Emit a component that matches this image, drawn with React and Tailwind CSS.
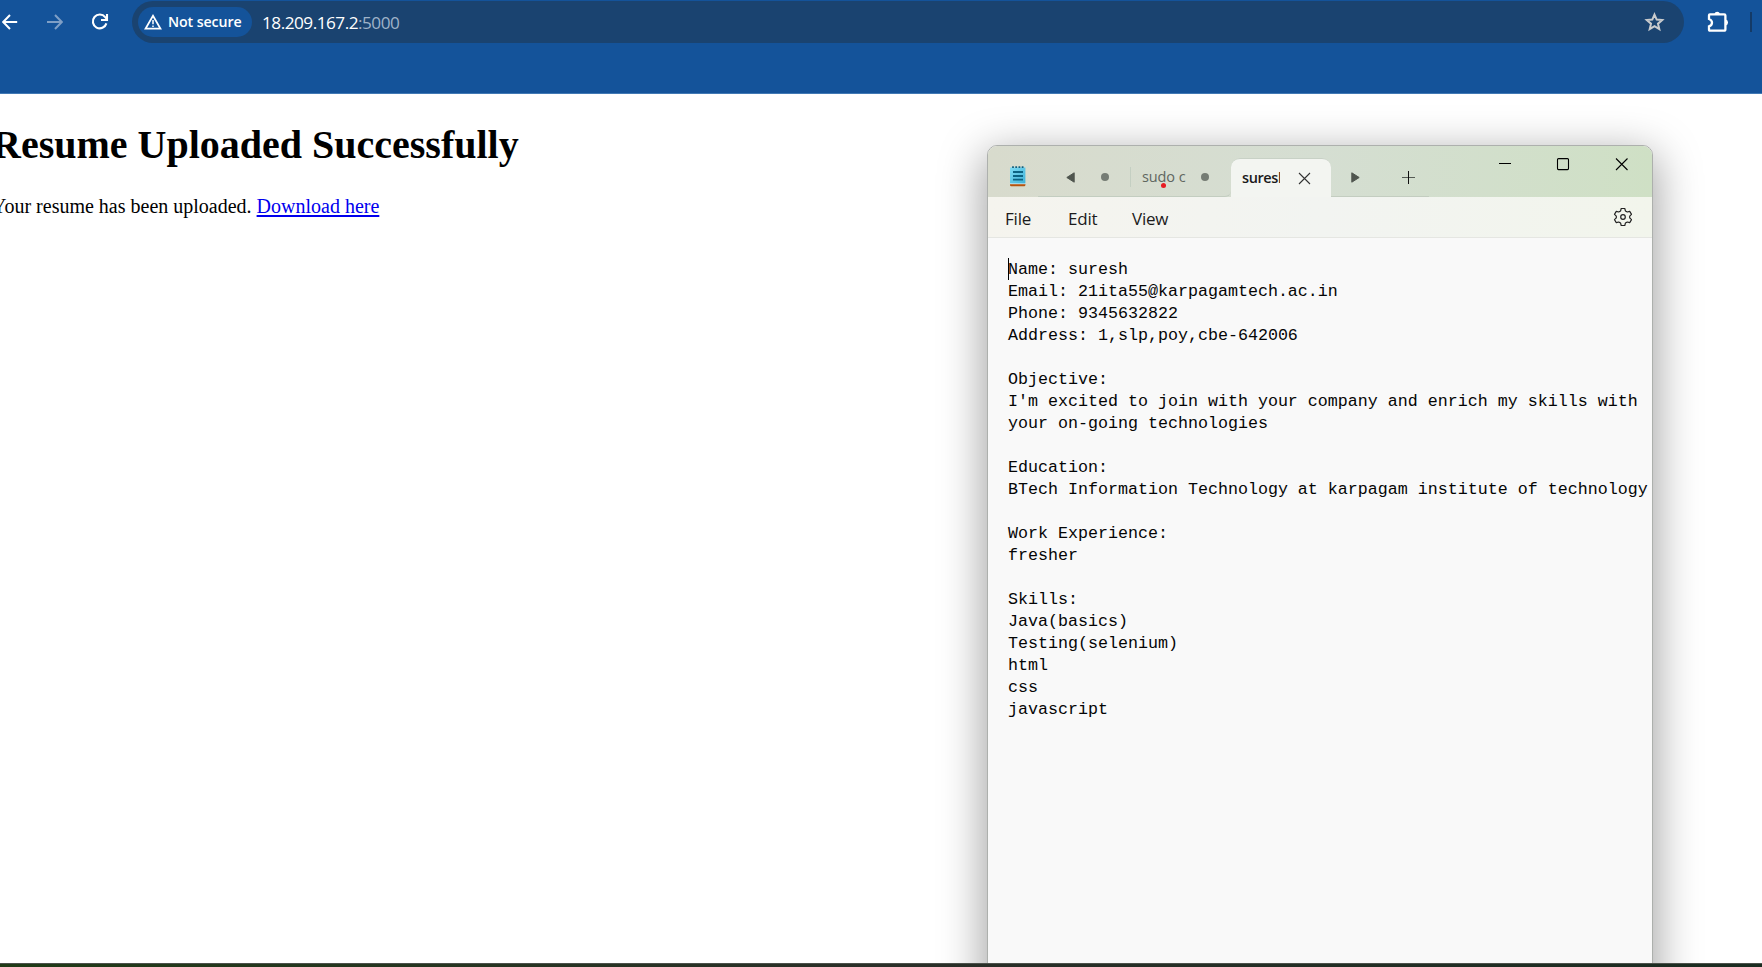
import React from "react";

const RESUME = `Name: suresh
Email: 21ita55@karpagamtech.ac.in
Phone: 9345632822
Address: 1,slp,poy,cbe-642006

Objective:
I'm excited to join with your company and enrich my skills with
your on-going technologies

Education:
BTech Information Technology at karpagam institute of technology

Work Experience:
fresher

Skills:
Java(basics)
Testing(selenium)
html
css
javascript`;

function BrowserBar() {
  return (
    <header className="flex h-[94px] shrink-0 items-start border-b border-[#4179b4] bg-[#14539a] font-['Open_Sans',sans-serif]">
      <div className="flex h-11 w-[132px] shrink-0 items-center">
        <svg className="ml-[2px] block" width="16" height="16" viewBox="0 0 16 16" fill="none" stroke="#fff" strokeWidth="2">
          <path d="M15.2 8H1.6M8 1L1.2 8L8 15" />
        </svg>
        <svg className="ml-[29px] block" width="16" height="16" viewBox="0 0 16 16" fill="none" stroke="#7f9fc6" strokeWidth="2">
          <path d="M0 8H14.2M8 1L14.8 8L8 15" />
        </svg>
        <svg className="ml-[28px] block" width="18" height="18" viewBox="0 0 18 18" fill="none" stroke="#fff" strokeWidth="2.1">
          <path d="M15.4 10.4A6.9 6.9 0 1 1 14.2 4.2L15.6 5.8" />
          <path d="M16 1V7H10" />
        </svg>
      </div>
      <div className="mt-px flex h-[42px] w-[1552px] shrink-0 items-center rounded-full bg-[#1a4370] pl-[6px]">
        <div className="flex h-[30px] w-[114px] items-center rounded-full bg-[#14539a] pl-[6px]">
          <svg className="block" width="18" height="16" viewBox="0 0 18 16" fill="none" stroke="#fff">
            <path d="M9 1.8L16.5 14.7H1.5Z" strokeWidth="1.7" />
            <path d="M9 6V10.2M9 11.4V13" strokeWidth="1.5" />
          </svg>
          <span className="ml-[6px] whitespace-nowrap text-[14.2px] font-semibold tracking-[-0.1px] text-white">Not secure</span>
        </div>
        <div className="ml-[10px] mt-[2px] whitespace-nowrap text-[17.2px] tracking-[-0.5px] text-white">
          18.209.167.2<span className="text-[#9fb2c8]">:5000</span>
        </div>
        <svg className="ml-auto mr-[19px] block" width="21" height="20" viewBox="0 0 21 20" fill="none" stroke="#c9cbcd" strokeWidth="2">
          <path d="M10.5 2.6L12.7 7.6L18.2 8.1L14 11.7L15.3 17.2L10.5 14.2L5.7 17.2L7 11.7L2.8 8.1L8.3 7.6Z" />
        </svg>
      </div>
      <div className="flex h-11 flex-1 items-center">
        <svg className="ml-[23px] block" width="22" height="22" viewBox="0 0 22 22">
          <path
            d="M2.9 3.3H17.2Q18.4 3.3 18.4 4.5V18.2Q18.4 19.7 17 19.7H3Q2 19.7 2 18.6V15.4Q5 14.4 5 11.7Q5 9.1 2 8V4.6Q2 3.3 2.9 3.3Z"
            fill="none"
            stroke="#fff"
            strokeWidth="2.3"
          />
          <path d="M7.4 3A2.9 2.9 0 0 1 13 3ZM18.8 8.6A3 3 0 0 1 18.8 14.4Z" fill="#fff" />
        </svg>
        <span className="ml-[21px] h-5 w-[2px] bg-[#143a66]" />
      </div>
    </header>
  );
}

function NotepadIcon() {
  return (
    <svg className="block" width="16" height="21" viewBox="0 0 16 21">
      <defs>
        <linearGradient id="sheet" x1="0" y1="0" x2="1" y2="1">
          <stop offset="0" stopColor="#7fdcf5" />
          <stop offset="1" stopColor="#3fb2d8" />
        </linearGradient>
      </defs>
      <path d="M0 18H15.4V19Q15.4 20.3 14.2 20.3H1.2Q0 20.3 0 19Z" fill="#b5530f" />
      <rect y="16.6" width="15.4" height="1.6" fill="#eaf6fa" />
      <path d="M0 1.5H15.4V17.4H0Z" fill="url(#sheet)" />
      <path d="M3 0.2V2M6.2 0.2V2M9.4 0.2V2M12.6 0.2V2" stroke="#12607f" strokeWidth="1.8" />
      <path d="M3 6H13M3 10H13M3 13.6H13" stroke="#0c6484" strokeWidth="1.9" />
    </svg>
  );
}

function Notepad() {
  return (
    <section className="absolute left-[987px] top-[51px] flex h-[900px] w-[666px] flex-col overflow-hidden rounded-[10px] border border-[#adb0ad] bg-[#f9f9f9] shadow-[0_12px_44px_4px_rgba(0,0,0,0.36)]">
      <div className="flex h-[51px] shrink-0 bg-gradient-to-r from-[#d8dbcd] via-[#d5ded2] to-[#cfe0c5] font-['Open_Sans',sans-serif]">
        <div className="w-[50px] shrink-0 pl-[22px] pt-[20px]">
          <NotepadIcon />
        </div>
        <div className="flex w-[193px] shrink-0 items-center rounded-br-[6px] border-b border-[#c3cdc0] pt-[12px]">
          <svg className="ml-[28px] block" width="9" height="11" viewBox="0 0 9 11">
            <path d="M8.2 0.8V10.2L0.8 5.5Z" fill="#50564f" stroke="#50564f" strokeLinejoin="round" />
          </svg>
          <span className="ml-[26px] size-2 rounded-full bg-[#757c74]" />
          <span className="ml-[21px] h-5 w-px bg-[#c4cfc2]" />
          <div className="relative ml-[11px] w-[46px] whitespace-nowrap text-[14.5px] leading-5 tracking-[-0.1px] text-[#60665f]">
            sudo c
            <span className="absolute left-[19px] top-[16px] size-[5px] rounded-full bg-[#e81c23]" />
          </div>
          <span className="ml-[13px] size-2 rounded-full bg-[#757c74]" />
        </div>
        <div className="mt-[12px] flex h-[39px] w-[100px] shrink-0 items-center rounded-t-[9px] border-t border-[#c8d1c6] bg-[#f3f5f1] pl-[11px]">
          <div className="w-[38px] shrink-0 overflow-hidden whitespace-nowrap text-[14.5px] font-semibold leading-5 tracking-[-0.4px] text-[#1a1a1a]">suresh</div>
          <svg className="ml-[18px] block shrink-0" width="13" height="13" viewBox="0 0 13 13" stroke="#333" strokeWidth="1.1">
            <path d="M1 1L12 12M12 1L1 12" />
          </svg>
        </div>
        <div className="flex w-[98px] shrink-0 items-center border-b border-[#c3cdc0] pt-[13px]">
          <svg className="ml-[20px] block" width="9" height="11" viewBox="0 0 9 11">
            <path d="M0.8 0.8V10.2L8.2 5.5Z" fill="#50564f" stroke="#50564f" strokeLinejoin="round" />
          </svg>
          <svg className="ml-[42px] block" width="13" height="13" viewBox="0 0 13 13">
            <path d="M0 6.5H13" stroke="#555b54" strokeWidth="1.2" />
            <path d="M6.5 0V13" stroke="#111" />
          </svg>
        </div>
        <div className="flex flex-1 items-start pl-[70px] pt-[12px]">
          <svg className="block" width="130" height="13" viewBox="0 0 130 13" fill="none" stroke="#000" strokeWidth="1.1">
            <path d="M0 5.5H12" />
            <rect x="58.5" y="0.6" width="11" height="11" rx="1" />
            <path d="M117 0.5L128.5 12M128.5 0.5L117 12" />
          </svg>
        </div>
      </div>
      <div className="flex h-[41px] shrink-0 items-center border-b border-[#e5e6e2] bg-gradient-to-r from-[#f5f4ee] via-[#f2f4f1] to-[#f2f5ec] pl-[17px] font-['Open_Sans',sans-serif] text-[17px] tracking-[-0.2px] text-[#1b1b1b]">
        <span className="w-[63px] pt-[3px]">File</span>
        <span className="w-[64px] pt-[3px]">Edit</span>
        <span className="pt-[3px]">View</span>
        <svg className="ml-auto mr-[19px] block" width="20" height="20" viewBox="0 0 20 20" fill="none" stroke="#222" strokeWidth="1.2" strokeLinejoin="round">
          <circle cx="10" cy="10" r="2.3" />
          <path d="M8.2 1.5H11.8L12.4 3.9L14.3 5L16.7 4.3L18.5 7.4L16.7 9.1V10.9L18.5 12.6L16.7 15.7L14.3 15L12.4 16.1L11.8 18.5H8.2L7.6 16.1L5.7 15L3.3 15.7L1.5 12.6L3.3 10.9V9.1L1.5 7.4L3.3 4.3L5.7 5L7.6 3.9Z" />
        </svg>
      </div>
      <div className="relative flex-1 pl-[20px] pt-[21px]">
        <pre className="font-['Liberation_Mono',monospace] text-[16.67px] leading-[22px] text-[#050505]">{RESUME}</pre>
        <span className="absolute left-[20px] top-[20px] h-[22px] w-px bg-black" />
      </div>
    </section>
  );
}

export default function App() {
  return (
    <div className="flex h-[967px] w-[1762px] flex-col overflow-hidden bg-white">
      <BrowserBar />
      <main className="relative flex-1 overflow-hidden font-['Liberation_Serif',serif] text-black">
        <h1 className="-ml-[8px] mt-[28px] whitespace-nowrap text-[40px] font-bold leading-[46px]">Resume Uploaded Successfully</h1>
        <p className="-ml-[8px] mt-[27px] whitespace-nowrap text-[20px] leading-[23px]">
          Your resume has been uploaded. <a className="text-[#0000ee] underline decoration-2 underline-offset-2">Download here</a>
        </p>
        <Notepad />
      </main>
      <footer className="h-1 shrink-0 border-t border-[#4c514b] bg-gradient-to-r from-[#1f3a16] via-[#2a2f28] to-[#1a2c20]" />
    </div>
  );
}
